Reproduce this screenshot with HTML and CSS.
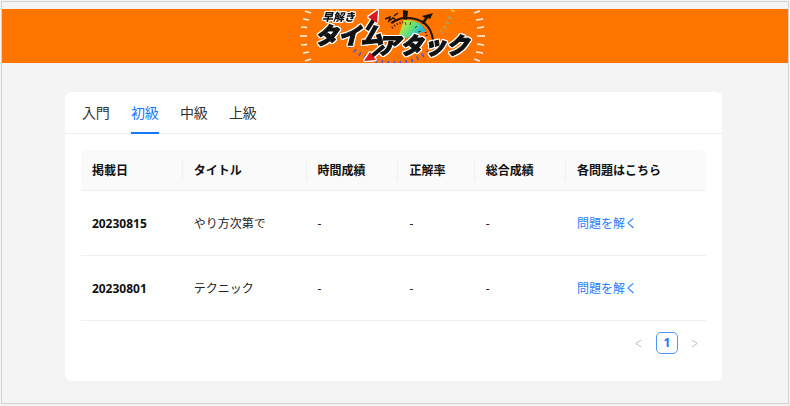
FILE: index.html
```html
<!DOCTYPE html>
<html lang="ja">
<head>
<meta charset="utf-8">
<meta name="viewport" content="width=device-width, initial-scale=1">
<title>早解きタイムアタック</title>
<link rel="stylesheet" href="styles.css">
</head>
<body>
<div class="frame">
  <header class="banner">
    <svg class="logo" viewBox="300 9 190 54" role="img" aria-label="早解きタイムアタック">
      <defs>
        <linearGradient id="fan" x1="0" y1="0" x2="1" y2=".6">
          <stop offset=".1" stop-color="#f6e52a"/><stop offset=".5" stop-color="#6be36c"/><stop offset=".85" stop-color="#22b9e0"/>
        </linearGradient>
      </defs>
      <g stroke="#fff" stroke-width="1.6" opacity=".9">
        <path d="M305 11l6 2M303 19l6 1M301 27l6 .5M300 36h7M301 45l6-.5M303 53l6-1M305 61l6-2"/>
        <path d="M474 13l6-2M476 20l7-1M477 28l7-1M477 36h8M477 44l7 1M476 52l7 1M474 59l6 2"/>
      </g>
      <g fill="none" stroke-width="4">
        <path stroke="#e2d322" stroke-dasharray="1.5 4" d="M331 11l6-3M453 10l-2 5"/>
        <path stroke="#9aae68" stroke-dasharray="1.5 4" d="M450 17q-3 9-9 15"/>
        <path stroke="#5250dc" stroke-dasharray="1.5 4.5" d="M350 46q14 15 40 17t46-18"/>
      </g>
      <g fill="none" stroke="#241408">
        <path d="M392 23q6-5 14-5 24 0 27 22" stroke-width="2"/>
        <path d="M392 28q6-6 15-6 18 0 20 16" stroke-width="2" stroke-dasharray="1 2"/>
        <path d="M385 19l5-2-1 4 4-3 3 2-5 3M394 16l4-3" stroke-width="1.5"/>
      </g>
      <path d="M397 41L404 20Q420 19 426 31z" fill="url(#fan)"/>
      <path d="M405 22l1 3M411 22l-1 3M417 26l-2 2M421 31l-3 1" stroke="#285321"/>
      <path d="M403 10l5 1-1 9-4-1zM421 23l4-5-3-2 11-3-3 6-2-1-4 6z" fill="#1b1208"/>
      <g class="logo-word">
        <text class="logo-small" x="322" y="21">早解き</text>
        <text class="logo-large" x="315" y="44">タイム</text>
        <text class="logo-large" x="377" y="54">アタック</text>
        <path class="shaft" d="M367 30L374 19M384 46L372 56"/>
        <path class="tip" d="M378 10l-1 13-9-6zM364 61l6-9 6 8z"/>
      </g>
    </svg>
  </header>
  <main class="card">
    <div class="tabs" role="tablist">
      <button class="tab" type="button" role="tab" aria-selected="false">入門</button>
      <button class="tab tab-active" type="button" role="tab" aria-selected="true">初級</button>
      <button class="tab" type="button" role="tab" aria-selected="false">中級</button>
      <button class="tab" type="button" role="tab" aria-selected="false">上級</button>
    </div>
    <div class="panel" role="tabpanel">
      <table class="results">
        <colgroup><col class="col-date"><col class="col-title"><col class="col-time"><col class="col-rate"><col class="col-total"><col></colgroup>
        <thead>
          <tr><th scope="col">掲載日</th><th scope="col">タイトル</th><th scope="col">時間成績</th><th scope="col">正解率</th><th scope="col">総合成績</th><th scope="col">各問題はこちら</th></tr>
        </thead>
        <tbody>
          <tr><th scope="row">20230815</th><td>やり方次第で</td><td>-</td><td>-</td><td>-</td><td><a href="#20230815">問題を解く</a></td></tr>
          <tr><th scope="row">20230801</th><td>テクニック</td><td>-</td><td>-</td><td>-</td><td><a href="#20230801">問題を解く</a></td></tr>
        </tbody>
      </table>
      <nav class="pager" aria-label="ページ">
        <button class="page" type="button" disabled aria-label="前へ"><svg class="arrow" viewBox="0 0 8 10"><path d="M7 1L1 5l6 4"/></svg></button>
        <button class="page page-current" type="button" aria-current="page">1</button>
        <button class="page" type="button" disabled aria-label="次へ"><svg class="arrow" viewBox="0 0 8 10"><path d="M1 1l6 4-6 4"/></svg></button>
      </nav>
    </div>
  </main>
</div>
</body>
</html>
```
FILE: styles.css
```css
* { box-sizing: border-box; }
body {
  margin: 0;
  padding: 1px 1px 2px;
  background: #f4f4f4;
  color: #222;
  font: 12px/20px "Noto Sans", "Noto Sans CJK JP", sans-serif;
}
.frame {
  min-height: calc(100vh - 3px);
  padding: 7px 0 20px;
  border: 1px solid #d2d2d2;
  background: #f4f4f4;
}
.banner {
  display: flex;
  justify-content: center;
  background: #ff7500;
}
.logo { display: block; width: 190px; height: 54px; }
.logo-word {
  fill: #111;
  font-family: "Noto Sans CJK JP", sans-serif;
  font-weight: 900;
  font-style: italic;
  filter: drop-shadow(1px 0 0 #fff) drop-shadow(-1px 0 0 #fff) drop-shadow(0 1px 0 #fff) drop-shadow(0 -1px 0 #fff);
}
.logo-small { font-size: 11px; }
.logo-large {
  font-size: 23px;
  stroke: #111;
  stroke-width: 1px;
}
.shaft { fill: none; stroke: #111; stroke-width: 4px; }
.tip { fill: #d81920; }
.card {
  margin: 29px 8.4% 0 8%;
  border-radius: 6px;
  background: #fff;
}
.tabs {
  display: flex;
  gap: 21px;
  padding: 0 17px;
  border-bottom: 1px solid #ececec;
}
.tab {
  margin: 0 0 -1px;
  padding: 10px 0 9px;
  border: 0;
  border-bottom: 2px solid transparent;
  background: none;
  color: #333;
  font: 14px/21px "Noto Sans CJK JP", sans-serif;
}
.tab-active { border-color: #1677ff; color: #1677ff; }
.panel { padding: 16px 16px 27px; }
.results {
  width: 100%;
  table-layout: fixed;
  border-spacing: 0;
}
.col-date { width: 16.3%; }
.col-title { width: 19.8%; }
.col-time { width: 14.7%; }
.col-rate { width: 12.2%; }
.col-total { width: 14.6%; }
th, td {
  padding: 23px 11px 21px;
  border-bottom: 1px solid #f0f0f0;
  text-align: left;
}
th { color: #111; font-weight: 700; }
thead th {
  padding: 11px 11px 9px;
  background: linear-gradient(#f0f0f0, #f0f0f0) right center / 1px 21px no-repeat #fafafa;
}
thead th:first-child { border-top-left-radius: 6px; }
thead th:last-child { border-top-right-radius: 6px; background: #fafafa; }
a { color: #2b7cff; text-decoration: none; }
.pager {
  display: flex;
  justify-content: flex-end;
  gap: 6px;
  margin-top: 11px;
}
.page {
  display: flex;
  align-items: center;
  justify-content: center;
  width: 22px;
  height: 22px;
  padding: 0;
  border: 1px solid transparent;
  border-radius: 5px;
  background: none;
  color: #1677ff;
  font: 700 12px/20px "Noto Sans", sans-serif;
}
.page-current { border-color: #4c94ff; }
.arrow {
  width: 7px;
  height: 9px;
  fill: none;
  stroke: #b0b0b0;
}
```
